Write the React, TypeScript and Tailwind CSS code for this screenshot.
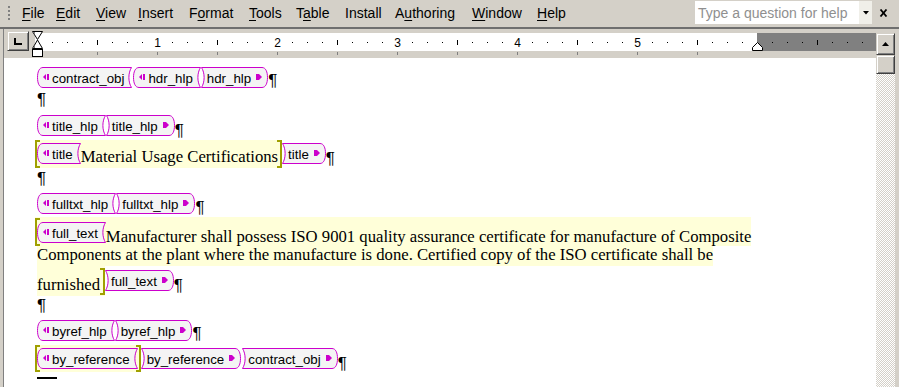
import React from 'react';

const MAG = '#cc00cc';
const TAG_BG = '#f4f4f4';

type MenuDef = { label: string; u: number; w: number };

const menus: MenuDef[] = [
  { label: 'File', u: 0, w: 34 },
  { label: 'Edit', u: 0, w: 40 },
  { label: 'View', u: 0, w: 42 },
  { label: 'Insert', u: 0, w: 51 },
  { label: 'Format', u: 1, w: 60 },
  { label: 'Tools', u: 0, w: 47 },
  { label: 'Table', u: 1, w: 49 },
  { label: 'Install', u: -1, w: 50 },
  { label: 'Authoring', u: 1, w: 77 },
  { label: 'Window', u: 0, w: 65 },
  { label: 'Help', u: 0, w: 40 },
];

export default function App() {
  return (
    <div className="flex h-[387px] w-[899px] flex-col overflow-hidden bg-[#d4d0c8] font-['Liberation_Sans',Arial,sans-serif] text-black">
      <MenuBar />
      <div className="flex min-h-0 flex-1">
        <div className="w-[4px] border-r border-[#808080] bg-[#d4d0c8]" />
        <div className="flex w-[872px] flex-col">
          <Ruler />
          <DocumentView />
        </div>
        <ScrollBar />
        <div className="w-[4px] bg-[#d4d0c8]" />
      </div>
    </div>
  );
}

function MenuBar() {
  return (
    <div className="flex h-[29px] shrink-0 items-center border-b-2 border-[#6f6f6f] pb-[2px]">
      <svg width="3" height="14" className="ml-[8px] shrink-0">
        {[0, 4, 8, 12].map((y) => (
          <rect key={y} x="0" y={y} width="2" height="2" fill="#808080" />
        ))}
      </svg>
      <div className="ml-[11px] flex text-[14px] leading-none">
        {menus.map((m) => (
          <span key={m.label} className="shrink-0" style={{ width: m.w }}>
            {m.label.split('').map((ch, i) =>
              i === m.u ? (
                <span key={i} className="underline underline-offset-2">
                  {ch}
                </span>
              ) : (
                <span key={i}>{ch}</span>
              ),
            )}
          </span>
        ))}
      </div>
      <div className="ml-auto flex items-center">
        <div className="flex h-[23px] w-[177px] items-center bg-white">
          <span className="pl-[3px] text-[14px] leading-none text-[#8f8f8f]">
            Type a question for help
          </span>
          <span className="ml-auto flex h-full w-[13px] items-center justify-center bg-[#f0efe9]">
            <svg width="6" height="4">
              <polygon points="0,0 6,0 3,3.5" fill="#000" />
            </svg>
          </span>
        </div>
        <svg width="10" height="8" className="ml-[7px] mr-[10px]">
          <path d="M1.5 0.5 7.5 7.5M7.5 0.5 1.5 7.5" stroke="#000" strokeWidth="1.8" />
        </svg>
      </div>
    </div>
  );
}

function RaisedBox({ className, children }: { className: string; children?: React.ReactNode }) {
  return (
    <div
      className={`flex items-center justify-center border border-t-[#d4d0c8] border-l-[#d4d0c8] border-r-[#404040] border-b-[#404040] bg-[#d4d0c8] shadow-[inset_1px_1px_#ffffff,inset_-1px_-1px_#808080] ${className}`}
    >
      {children}
    </div>
  );
}

function Ruler() {
  const marks: React.ReactNode[] = [];
  for (let k = 1; k <= 55; k++) {
    const x = 2 + 15 * k;
    if (k === 48) continue;
    if (k % 8 === 0) {
      marks.push(
        <text
          key={k}
          x={x + 0.5}
          y="14"
          fontSize="12"
          textAnchor="middle"
          fontFamily="Liberation Sans, Arial, sans-serif"
          fill="#000"
        >
          {k / 8}
        </text>,
      );
    } else if (k % 4 === 0) {
      marks.push(<rect key={k} x={x} y="7" width="1" height="5" fill="#000" />);
    } else {
      marks.push(<rect key={k} x={x} y="9" width="1" height="1" fill="#000" />);
    }
    if (k % 4 === 0 && x <= 662) {
      marks.push(<rect key={`b${k}`} x={x} y="19" width="1" height="3" fill="#808080" />);
    }
  }

  return (
    <div className="flex h-[29px] shrink-0">
      <RaisedBox className="ml-[3px] mt-[2px] h-[20px] w-[22px]">
        <svg width="8" height="7">
          <rect x="0" y="0" width="2" height="7" fill="#000" />
          <rect x="0" y="5" width="8" height="2" fill="#000" />
        </svg>
      </RaisedBox>
      <div className="relative ml-[6px] mt-[4px] h-[24px] flex-1">
        <svg width="841" height="24" className="block">
          <rect x="0" y="0" width="722" height="18" fill="#ffffff" />
          <rect x="722" y="0" width="119" height="18" fill="#808080" />
          {marks}
          <polygon
            points="717.5,17.5 717.5,14.5 722.5,9.5 727.5,14.5 727.5,17.5"
            fill="#ffffff"
            stroke="#000"
          />
        </svg>
        <svg width="12" height="27" className="absolute left-[-3px] top-[-2px]">
          <polygon points="0.5,0.5 10.5,0.5 5.5,8.5" fill="#fff" stroke="#000" />
          <polygon points="5.5,9 0.5,17.5 10.5,17.5" fill="#fff" stroke="#000" />
          <rect x="0.5" y="18.5" width="10" height="7" fill="#fff" stroke="#000" />
          <polygon points="1,1 3,1 3,4" fill="#808080" />
          <polygon points="3,14 1,17 3,17" fill="#808080" />
        </svg>
      </div>
    </div>
  );
}

function ScrollBar() {
  return (
    <div className="flex w-[19px] flex-col">
      <div className="h-[4px]" />
      <RaisedBox className="h-[22px] w-[19px]">
        <svg width="7" height="4">
          <polygon points="3.5,0 7,4 0,4" fill="#000" />
        </svg>
      </RaisedBox>
      <RaisedBox className="h-[19px] w-[19px]" />
      <div className="flex-1 bg-[repeating-conic-gradient(#d4d0c8_0%_25%,#ffffff_0%_50%)] bg-[length:2px_2px]" />
    </div>
  );
}

function StartMark() {
  return (
    <svg width="6" height="8" className="shrink-0">
      <polygon points="0,4 3,1 3,7" fill={MAG} />
      <rect x="4" y="1" width="2" height="6" fill={MAG} />
    </svg>
  );
}

function EndMark() {
  return (
    <svg width="6" height="8" className="shrink-0">
      <polygon points="0,1 3,1 6,4 3,7 0,7" fill={MAG} />
    </svg>
  );
}

function StartTag({ name, className = '' }: { name: string; className?: string }) {
  return (
    <span className={`flex h-[21px] shrink-0 ${className}`}>
      <svg width="6" height="21" className="shrink-0">
        <path d="M6 .5C2.2.5.5 5 .5 10.5S2.2 20.5 6 20.5Z" fill={TAG_BG} />
        <path d="M6 .5C2.2.5.5 5 .5 10.5S2.2 20.5 6 20.5" fill="none" stroke={MAG} />
      </svg>
      <span className="flex h-[21px] items-start border-y border-[#cc00cc] bg-[#f4f4f4] pr-[3px]">
        <span className="mt-[5px]">
          <StartMark />
        </span>
        <span className="ml-[3px] mt-[4px] whitespace-nowrap text-[13.3px] leading-[13px]">{name}</span>
      </span>
      <svg width="5" height="21" className="shrink-0">
        <path d="M0 .5H4.5C1 6 1 15 4.5 20.5H0Z" fill={TAG_BG} />
        <path d="M0 .5H4.5C1 6 1 15 4.5 20.5H0" fill="none" stroke={MAG} />
      </svg>
    </span>
  );
}

function EndTag({ name, className = '' }: { name: string; className?: string }) {
  return (
    <span className={`flex h-[21px] shrink-0 ${className}`}>
      <svg width="5" height="21" className="shrink-0">
        <path d="M5 .5H.5C4 6 4 15 .5 20.5H5Z" fill={TAG_BG} />
        <path d="M5 .5H.5C4 6 4 15 .5 20.5H5" fill="none" stroke={MAG} />
      </svg>
      <span className="flex h-[21px] items-start border-y border-[#cc00cc] bg-[#f4f4f4] pl-[1px]">
        <span className="mt-[4px] whitespace-nowrap text-[13.3px] leading-[13px]">{name}</span>
        <span className="ml-[5px] mt-[5px]">
          <EndMark />
        </span>
      </span>
      <svg width="6" height="21" className="shrink-0">
        <path d="M0 .5C3.8.5 5.5 5 5.5 10.5S3.8 20.5 0 20.5Z" fill={TAG_BG} />
        <path d="M0 .5C3.8.5 5.5 5 5.5 10.5S3.8 20.5 0 20.5" fill="none" stroke={MAG} />
      </svg>
    </span>
  );
}

function Bracket({ side, className = '' }: { side: 'l' | 'r'; className?: string }) {
  return (
    <span
      className={`w-[5px] shrink-0 self-stretch border-y-2 border-[#a0a000] ${
        side === 'l' ? 'border-l-2' : 'border-r-2'
      } ${className}`}
    />
  );
}

function Pilcrow({ className = '' }: { className?: string }) {
  return <span className={`shrink-0 text-[17px] leading-[15px] ${className}`}>¶</span>;
}

function Body({ children, className = '' }: { children: React.ReactNode; className?: string }) {
  return (
    <span
      className={`whitespace-nowrap font-['Liberation_Serif','Times_New_Roman',serif] text-[16.7px] leading-[18px] ${className}`}
    >
      {children}
    </span>
  );
}

function DocumentView() {
  return (
    <div className="flex-1 bg-white pl-[33px]">
      {/* contract_obj + hdr_hlp */}
      <div className="flex h-[32px] items-start">
        <StartTag name="contract_obj" className="mt-[9px]" />
        <StartTag name="hdr_hlp" className="ml-[1px] mt-[9px]" />
        <EndTag name="hdr_hlp" className="mt-[9px]" />
        <Pilcrow className="mt-[15px]" />
      </div>
      <div className="flex h-[22px] items-start">
        <Pilcrow className="mt-[2px]" />
      </div>

      {/* title */}
      <div className="flex h-[25px] items-start">
        <StartTag name="title_hlp" className="mt-[3px]" />
        <EndTag name="title_hlp" className="mt-[3px]" />
        <Pilcrow className="mt-[11px]" />
      </div>
      <div className="flex h-[32px] items-start">
        <span className="-ml-[2px] mt-[3px] flex h-[28px] items-start bg-[#ffffd9]">
          <Bracket side="l" className="-mr-[3px]" />
          <StartTag name="title" className="mt-[3px]" />
          <Body className="mt-[8px]">Material Usage Certifications</Body>
          <Bracket side="r" className="-ml-[1px]" />
        </span>
        <EndTag name="title" className="mt-[6px]" />
        <Pilcrow className="mt-[14px]" />
      </div>
      <div className="flex h-[21px] items-start">
        <Pilcrow className="mt-[2px]" />
      </div>

      {/* full_text */}
      <div className="flex h-[27px] items-start">
        <StartTag name="fulltxt_hlp" className="mt-[3px]" />
        <EndTag name="fulltxt_hlp" className="mt-[3px]" />
        <Pilcrow className="mt-[10px]" />
      </div>
      <div className="-ml-[2px] flex h-[29px] w-fit items-start bg-[#ffffd9]">
        <Bracket side="l" className="mt-[1px] -mr-[3px]" />
        <StartTag name="full_text" className="mt-[5px]" />
        <Body className="mt-[11px]">
          Manufacturer shall possess ISO 9001 quality assurance certificate for manufacture of Composite
        </Body>
      </div>
      <div className="flex h-[20px] w-fit items-start bg-[#ffffd9]">
        <Body>
          Components at the plant where the manufacture is done. Certified copy of the ISO certificate shall be
        </Body>
      </div>
      <div className="flex h-[32px] items-start">
        <span className="flex h-[30px] items-start bg-[#ffffd9]">
          <Body className="mt-[10px]">furnished</Body>
          <Bracket side="r" className="mt-[2px] mb-[1px]" />
        </span>
        <EndTag name="full_text" className="mt-[4px]" />
        <Pilcrow className="mt-[12px]" />
      </div>
      <div className="flex h-[20px] items-start">
        <Pilcrow />
      </div>

      {/* by_reference */}
      <div className="flex h-[25px] items-start">
        <StartTag name="byref_hlp" className="mt-[2px]" />
        <EndTag name="byref_hlp" className="mt-[2px]" />
        <Pilcrow className="mt-[8px]" />
      </div>
      <div className="flex h-[31px] items-start">
        <span className="-ml-[2px] mt-[2px] flex h-[27px] items-start bg-[#ffffd9]">
          <Bracket side="l" className="-mr-[3px]" />
          <StartTag name="by_reference" className="mt-[3px]" />
          <Bracket side="r" className="-ml-[2px]" />
        </span>
        <EndTag name="by_reference" className="mt-[5px]" />
        <EndTag name="contract_obj" className="ml-[1px] mt-[5px]" />
        <Pilcrow className="mt-[13px]" />
      </div>
      <div className="mt-[3px] h-[2px] w-[20px] bg-black" />
    </div>
  );
}
